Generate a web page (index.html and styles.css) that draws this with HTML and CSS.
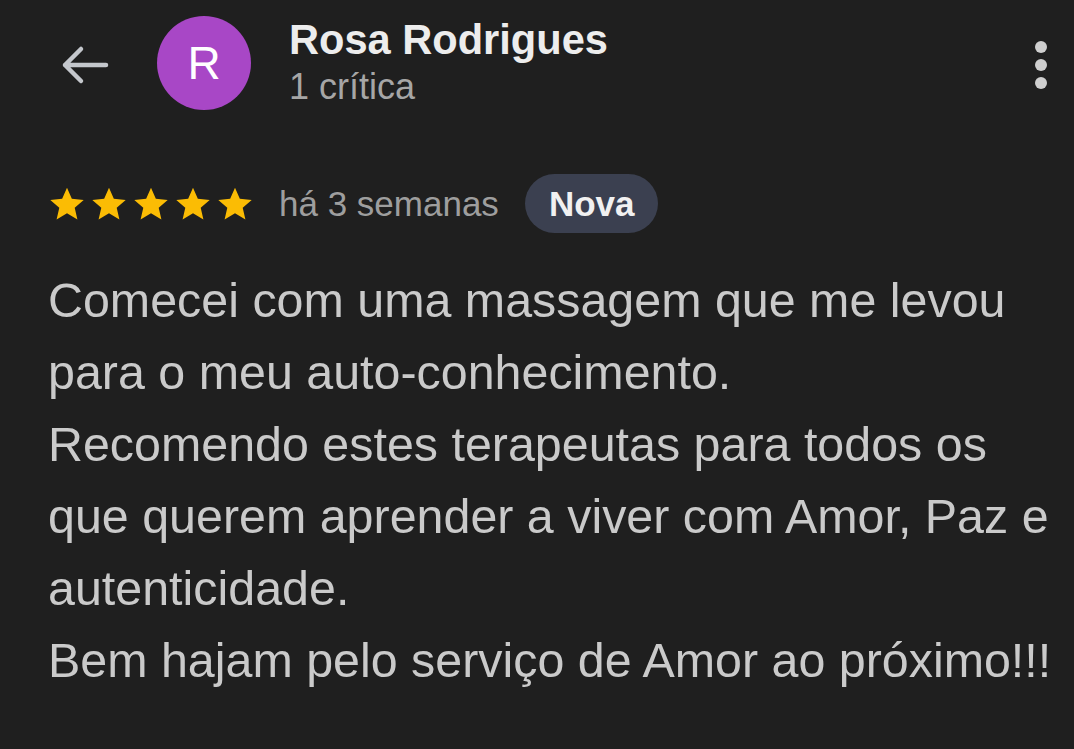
FILE: index.html
```html
<!DOCTYPE html>
<html lang="pt">
<head>
<meta charset="utf-8">
<link rel="stylesheet" href="styles.css">
</head>
<body>
<div class="page">
  <header class="top">
    <svg class="back" width="50" height="40" viewBox="0 0 50 40"><path d="M47 20H6M22 4L6 20l16 16" fill="none" stroke="#c4c7cc" stroke-width="4.5" stroke-linecap="round" stroke-linejoin="round"/></svg>
    <div class="avatar">R</div>
    <div class="who">
      <div class="name">Rosa Rodrigues</div>
      <div class="count">1 crítica</div>
    </div>
    <div class="kebab"><span></span><span></span><span></span></div>
  </header>
  <div class="meta">
    <div class="stars">
      <svg viewBox="0 0 24 24"><path d="M12 1.8l3.05 6.9 7.5.7-5.68 5 1.7 7.4L12 17.9l-6.57 3.9 1.7-7.4-5.68-5 7.5-.7z"/></svg>
      <svg viewBox="0 0 24 24"><path d="M12 1.8l3.05 6.9 7.5.7-5.68 5 1.7 7.4L12 17.9l-6.57 3.9 1.7-7.4-5.68-5 7.5-.7z"/></svg>
      <svg viewBox="0 0 24 24"><path d="M12 1.8l3.05 6.9 7.5.7-5.68 5 1.7 7.4L12 17.9l-6.57 3.9 1.7-7.4-5.68-5 7.5-.7z"/></svg>
      <svg viewBox="0 0 24 24"><path d="M12 1.8l3.05 6.9 7.5.7-5.68 5 1.7 7.4L12 17.9l-6.57 3.9 1.7-7.4-5.68-5 7.5-.7z"/></svg>
      <svg viewBox="0 0 24 24"><path d="M12 1.8l3.05 6.9 7.5.7-5.68 5 1.7 7.4L12 17.9l-6.57 3.9 1.7-7.4-5.68-5 7.5-.7z"/></svg>
    </div>
    <span class="when">há 3 semanas</span>
    <span class="chip">Nova</span>
  </div>
  <p class="review">Comecei com uma massagem que me levou<br>para o meu auto-conhecimento.<br>Recomendo estes terapeutas para todos os<br>que querem aprender a viver com Amor, Paz e<br>autenticidade.<br>Bem hajam pelo serviço de Amor ao próximo!!!</p>
</div>
</body>
</html>
```
FILE: styles.css
```css
html, body {
  margin: 0;
  padding: 0;
  background: #1f1f1f;
}
body {
  font-family: "Liberation Sans", Arial, sans-serif;
  width: 1074px;
  height: 749px;
  overflow: hidden;
}
.page {
  padding: 0 0 0 48px;
}
.top {
  display: flex;
  align-items: flex-start;
  height: 150px;
}
.back {
  margin: 45px 0 0 11px;
  flex: none;
}
.avatar {
  flex: none;
  width: 94px;
  height: 94px;
  border-radius: 50%;
  background: #a847c6;
  color: #fff;
  font-size: 46px;
  display: flex;
  align-items: center;
  justify-content: center;
  margin: 16px 0 0 48px;
}
.who {
  margin: 17px 0 0 38px;
  flex: 1;
}
.name {
  font-size: 41.6px;
  font-weight: bold;
  color: #ededed;
  line-height: 46px;
}
.count {
  font-size: 36px;
  color: #a6a6a6;
  line-height: 48px;
}
.kebab {
  display: flex;
  flex-direction: column;
  gap: 6px;
  margin: 41px 27px 0 0;
}
.kebab span {
  width: 12px;
  height: 12px;
  border-radius: 50%;
  background: #cfcfcf;
}
.meta {
  display: flex;
  align-items: center;
  margin-top: 24px;
  height: 59px;
}
.stars {
  display: flex;
  gap: 4px;
}
.stars svg {
  width: 38px;
  height: 38px;
  fill: #fbbc04;
}
.when {
  margin-left: 25px;
  font-size: 35px;
  color: #9e9e9e;
}
.chip {
  margin-left: 26px;
  height: 59px;
  padding: 0 24px;
  border-radius: 30px;
  background: #3b4050;
  color: #f1f1f1;
  font-size: 35px;
  font-weight: bold;
  display: flex;
  align-items: center;
}
.review {
  margin: 31px 0 0 0;
  font-size: 48.4px;
  line-height: 72px;
  color: #cacaca;
}
```
